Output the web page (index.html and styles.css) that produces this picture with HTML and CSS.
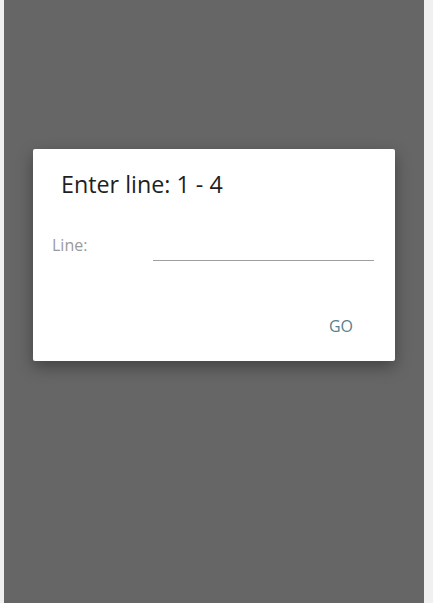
FILE: index.html
```html
<!DOCTYPE html>
<html lang="en">
<head>
    <meta charset="UTF-8">
    <meta name="viewport" content="width=device-width, initial-scale=1.0">
    <title>Go to line</title>
    <link rel="stylesheet" href="styles.css">
</head>
<body>

    <div class="screen">
        <div class="edge-left"></div>

        <!-- Backdrop with dialog -->
        <div class="backdrop">
            <div class="dialog">
                <h1 class="dialog-title">Enter line: 1 - 4</h1>
                <div class="field">
                    <label class="field-label" for="lineInput">Line:</label>
                    <input class="field-input" id="lineInput" type="text">
                </div>
                <div class="actions">
                    <button class="go-btn">GO</button>
                </div>
            </div>
        </div>

        <div class="edge-right"></div>
    </div>

</body>
</html>
```

FILE: styles.css
```css
* {
    margin: 0;
    padding: 0;
    box-sizing: border-box;
}

body {
    font-family: 'Open Sans', sans-serif;
    background-color: #f0f0f0;
    color: #212121;
}

.screen {
    display: flex;
    height: 603px;
}

.edge-left {
    width: 4px;
    background-color: #f0f0f0;
}

.edge-right {
    flex: 1;
    background-color: #f0f0f0;
}

.backdrop {
    width: 420px;
    background-color: #666666;
    padding: 149px 0 0 29px;
}

.dialog {
    width: 362px;
    height: 212px;
    background-color: #ffffff;
    border-radius: 2px;
    box-shadow: 0 6px 16px rgba(0, 0, 0, 0.35);
    display: flex;
    flex-direction: column;
}

.dialog-title {
    font-size: 23.3px;
    font-weight: normal;
    color: #1f1f1f;
    padding: 19px 0 0 28px;
    line-height: 33px;
}

.field {
    display: flex;
    align-items: flex-start;
    padding: 33px 21px 0 19px;
}

.field-label {
    font-size: 16px;
    color: #9a9a9a;
    line-height: 22px;
    width: 101px;
}

.field-input {
    flex: 1;
    height: 27px;
    border: none;
    border-bottom: 1px solid #9e9e9e;
    outline: none;
    font-family: 'Open Sans', sans-serif;
    font-size: 16px;
    background: none;
}

.actions {
    display: flex;
    justify-content: flex-end;
    padding: 54px 42px 0 0;
}

.go-btn {
    border: none;
    background: none;
    font-family: 'Open Sans', sans-serif;
    font-size: 16px;
    line-height: 22px;
    color: #587f8f;
    cursor: pointer;
}
```
